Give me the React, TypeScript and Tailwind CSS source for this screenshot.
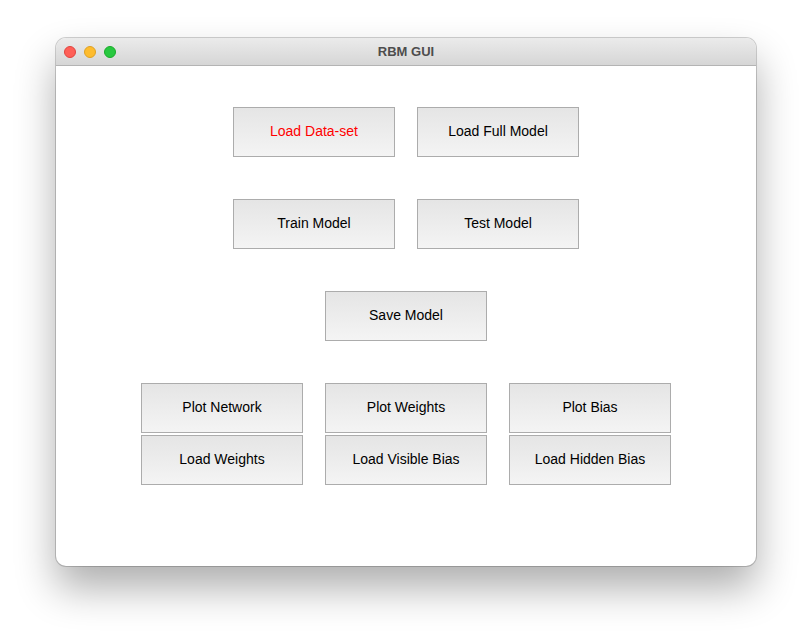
import React from "react";

const Btn = ({ label, red }: { label: string; red?: boolean }) => (
  <button
    className={`w-[162px] h-[50px] pb-[2px] border border-[#acacac] bg-gradient-to-b from-[#e5e5e5] to-[#f4f4f4] text-[14px] leading-none ${red ? "text-[#ff0000]" : "text-black"}`}
    style={{ fontFamily: '"Liberation Sans", Arial, sans-serif' }}
  >
    {label}
  </button>
);

export default function App() {
  return (
    <div className="w-[812px] h-[640px] bg-white pt-[38px] pl-[56px]">
      <div className="w-[700px] h-[528px] rounded-[10px] bg-white shadow-[0_22px_40px_rgba(0,0,0,0.32),0_0_0_1px_rgba(0,0,0,0.18)] overflow-hidden flex flex-col">
        <div className="relative h-[28px] shrink-0 bg-gradient-to-b from-[#ebebeb] to-[#d6d6d6] border-b border-[#b4b4b4] flex items-center">
          <div className="flex items-center gap-[8px] pl-[8px]">
            <span className="w-[12px] h-[12px] rounded-full bg-[#fe5f57] border border-[#e0443e]" />
            <span className="w-[12px] h-[12px] rounded-full bg-[#febc2e] border border-[#dea123]" />
            <span className="w-[12px] h-[12px] rounded-full bg-[#28c840] border border-[#1aab29]" />
          </div>
          <div
            className="absolute inset-0 flex items-center justify-center text-[13px] font-bold text-[#4d4d4d]"
            style={{ fontFamily: '"Liberation Sans", Arial, sans-serif' }}
          >
            RBM GUI
          </div>
        </div>
        <div className="flex flex-col items-center pt-[41px]">
          <div className="flex gap-[22px]">
            <Btn label="Load Data-set" red />
            <Btn label="Load Full Model" />
          </div>
          <div className="flex gap-[22px] mt-[42px]">
            <Btn label="Train Model" />
            <Btn label="Test Model" />
          </div>
          <div className="flex mt-[42px]">
            <Btn label="Save Model" />
          </div>
          <div className="flex gap-[22px] mt-[42px]">
            <Btn label="Plot Network" />
            <Btn label="Plot Weights" />
            <Btn label="Plot Bias" />
          </div>
          <div className="flex gap-[22px] mt-[2px]">
            <Btn label="Load Weights" />
            <Btn label="Load Visible Bias" />
            <Btn label="Load Hidden Bias" />
          </div>
        </div>
      </div>
    </div>
  );
}
